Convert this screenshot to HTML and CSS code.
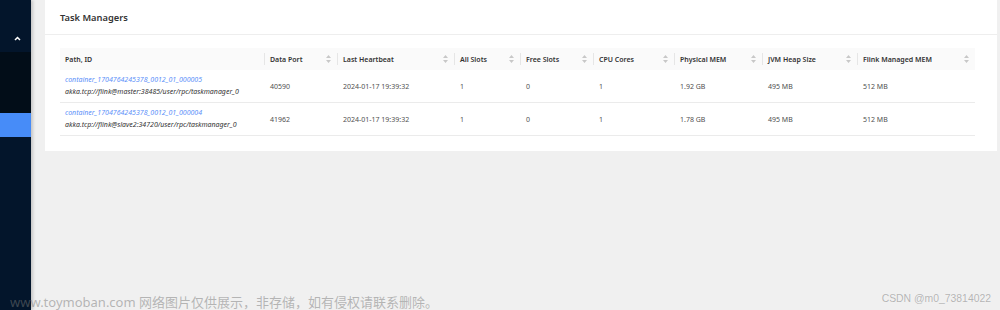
FILE: index.html
```html
<!DOCTYPE html>
<html lang="en">
  <head>
    <meta charset="UTF-8" />
    <meta name="viewport" content="width=device-width, initial-scale=1.0" />
    <title>Task Managers</title>
    <link rel="stylesheet" href="styles.css">
  </head>
  <body>
    <aside class="sidebar">
      <div class="menu-top">
        <svg class="chevron" width="7" height="5" viewBox="0 0 7 5">
          <polyline points="1,4 3.5,1.5 6,4" fill="none" stroke="#fff" stroke-width="1.5" />
        </svg>
      </div>
      <div class="submenu"></div>
      <div class="menu-item active"></div>
    </aside>

    <main class="content">
      <div class="card">
        <div class="card-head">
          <h2>Task Managers</h2>
        </div>
        <div class="card-body">
          <table class="tm-table">
            <colgroup>
              <col style="width: 204px" />
              <col style="width: 73px" />
              <col style="width: 117px" />
              <col style="width: 66px" />
              <col style="width: 73px" />
              <col style="width: 81px" />
              <col style="width: 88px" />
              <col style="width: 95px" />
              <col style="width: 118px" />
            </colgroup>
            <thead>
              <tr>
                <th><div class="th-inner">Path, ID</div></th>
                <th>
                  <div class="th-inner">Data Port
                    <svg class="sorter" width="5" height="8" viewBox="0 0 5 8"><path d="M2.5 0L5 3H0z M2.5 8L5 5H0z" /></svg>
                  </div>
                </th>
                <th>
                  <div class="th-inner">Last Heartbeat
                    <svg class="sorter" width="5" height="8" viewBox="0 0 5 8"><path d="M2.5 0L5 3H0z M2.5 8L5 5H0z" /></svg>
                  </div>
                </th>
                <th>
                  <div class="th-inner">All Slots
                    <svg class="sorter" width="5" height="8" viewBox="0 0 5 8"><path d="M2.5 0L5 3H0z M2.5 8L5 5H0z" /></svg>
                  </div>
                </th>
                <th>
                  <div class="th-inner">Free Slots
                    <svg class="sorter" width="5" height="8" viewBox="0 0 5 8"><path d="M2.5 0L5 3H0z M2.5 8L5 5H0z" /></svg>
                  </div>
                </th>
                <th>
                  <div class="th-inner">CPU Cores
                    <svg class="sorter" width="5" height="8" viewBox="0 0 5 8"><path d="M2.5 0L5 3H0z M2.5 8L5 5H0z" /></svg>
                  </div>
                </th>
                <th>
                  <div class="th-inner">Physical MEM
                    <svg class="sorter" width="5" height="8" viewBox="0 0 5 8"><path d="M2.5 0L5 3H0z M2.5 8L5 5H0z" /></svg>
                  </div>
                </th>
                <th>
                  <div class="th-inner">JVM Heap Size
                    <svg class="sorter" width="5" height="8" viewBox="0 0 5 8"><path d="M2.5 0L5 3H0z M2.5 8L5 5H0z" /></svg>
                  </div>
                </th>
                <th>
                  <div class="th-inner">Flink Managed MEM
                    <svg class="sorter" width="5" height="8" viewBox="0 0 5 8"><path d="M2.5 0L5 3H0z M2.5 8L5 5H0z" /></svg>
                  </div>
                </th>
              </tr>
            </thead>
            <tbody>
              <tr>
                <td>
                  <a href="#">container_1704764245378_0012_01_000005</a>
                  <div class="akka">akka.tcp://flink@master:38485/user/rpc/taskmanager_0</div>
                </td>
                <td>40590</td>
                <td>2024-01-17 19:39:32</td>
                <td>1</td>
                <td>0</td>
                <td>1</td>
                <td>1.92 GB</td>
                <td>495 MB</td>
                <td>512 MB</td>
              </tr>
              <tr>
                <td>
                  <a href="#">container_1704764245378_0012_01_000004</a>
                  <div class="akka">akka.tcp://flink@slave2:34720/user/rpc/taskmanager_0</div>
                </td>
                <td>41962</td>
                <td>2024-01-17 19:39:32</td>
                <td>1</td>
                <td>0</td>
                <td>1</td>
                <td>1.78 GB</td>
                <td>495 MB</td>
                <td>512 MB</td>
              </tr>
            </tbody>
          </table>
        </div>
      </div>
    </main>

    <div class="watermark">www.toymoban.com 网络图片仅供展示，非存储，如有侵权请联系删除。</div>
    <div class="credit">CSDN @m0_73814022</div>
  </body>
</html>
```

FILE: styles.css
```css
html,
body {
  margin: 0;
  height: 310px;
  overflow: hidden;
}
body {
  display: flex;
  background-color: #f0f0f0;
  font-family: "Noto Sans", "Open Sans", Arial, sans-serif;
  color: #505050;
}
.sidebar {
  width: 31px;
  flex-shrink: 0;
  background-color: #03152b;
  box-shadow: 2px 0 3px rgba(0, 0, 0, 0.18);
  position: relative;
  z-index: 1;
}
.menu-top {
  height: 52px;
  display: flex;
  justify-content: center;
  align-items: flex-start;
}
.chevron {
  margin-top: 36px;
  margin-left: 4px;
}
.submenu {
  height: 61px;
  background-color: #020d18;
}
.menu-item.active {
  height: 24px;
  background-color: #478cf8;
}
.content {
  flex: 1;
  padding: 0 3px 0 14px;
}
.card {
  background-color: #fff;
  height: 151px;
}
.card-head {
  height: 34px;
  border-bottom: 1px solid #eeeeee;
  padding-left: 15px;
  display: flex;
  align-items: center;
}
.card-head h2 {
  margin: 0;
  font-size: 9.3px;
  font-weight: 600;
  color: #333;
}
.card-body {
  padding: 13px 22px 15px 15px;
}
.tm-table {
  width: 915px;
  table-layout: fixed;
  border-collapse: collapse;
  font-size: 7px;
}
.tm-table th {
  height: 22px;
  padding: 0;
  background-color: #fafafa;
  text-align: left;
  font-weight: 600;
  color: #333;
  position: relative;
}
.tm-table th + th::before {
  content: "";
  position: absolute;
  left: 0;
  top: 5px;
  height: 12px;
  border-left: 1px solid #e6e6e6;
}
.th-inner {
  display: flex;
  justify-content: space-between;
  align-items: center;
  padding: 0 6px 0 6px;
}
.tm-table th:first-child .th-inner {
  padding-left: 5px;
}
.sorter {
  fill: #c8c8c8;
  flex-shrink: 0;
}
.tm-table td {
  height: 32px;
  padding: 0 6px;
  border-bottom: 1px solid #ebebeb;
  white-space: nowrap;
}
.tm-table td:first-child {
  padding-left: 5px;
  line-height: 12px;
}
.tm-table a {
  color: #5b8ff9;
  text-decoration: none;
  font-style: italic;
}
.akka {
  font-style: italic;
  color: #333;
}
.watermark {
  position: absolute;
  left: 10px;
  top: 292px;
  font-family: "Noto Sans", "Noto Sans CJK SC", sans-serif;
  font-size: 13px;
  color: rgba(120, 120, 120, 0.5);
  z-index: 2;
  white-space: nowrap;
}
.credit {
  position: absolute;
  right: 9px;
  top: 293px;
  font-family: "Liberation Sans", Arial, sans-serif;
  font-size: 10.4px;
  color: #b4b4b4;
  text-shadow: 0 0 1px #fff;
  z-index: 2;
}
```
